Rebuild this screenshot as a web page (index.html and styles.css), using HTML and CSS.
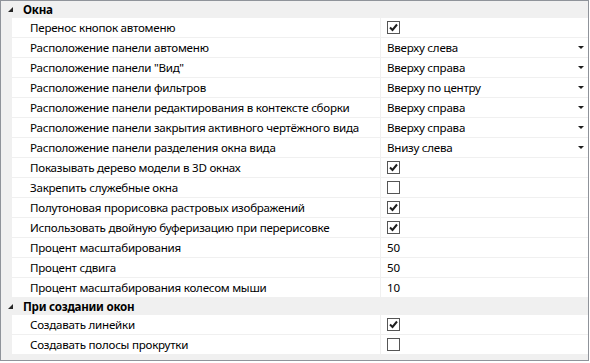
FILE: index.html
```html
<!DOCTYPE html>
<html lang="ru">
<head>
<meta charset="utf-8">
<title>Окна</title>
<link rel="stylesheet" href="styles.css">
</head>
<body>
<div class="pg">
  <div class="cat"><span class="tri"><svg width="5" height="5" viewBox="0 0 5 5"><polygon points="5,0 5,5 0,5" fill="#262626"/></svg></span><span class="cat-t">Окна</span></div>

  <div class="row"><div class="gut"></div><div class="name">Перенос кнопок автоменю</div><div class="val"><span class="cb"><svg width="11" height="11" viewBox="0 0 11 11"><path d="M2 5.5 L4.5 8 L9 2.5" fill="none" stroke="#1e1e1e" stroke-width="2"/></svg></span></div></div>
  <div class="row"><div class="gut"></div><div class="name">Расположение панели автоменю</div><div class="val"><span>Вверху слева</span><span class="dd"></span></div></div>
  <div class="row"><div class="gut"></div><div class="name">Расположение панели "Вид"</div><div class="val"><span>Вверху справа</span><span class="dd"></span></div></div>
  <div class="row"><div class="gut"></div><div class="name">Расположение панели фильтров</div><div class="val"><span>Вверху по центру</span><span class="dd"></span></div></div>
  <div class="row"><div class="gut"></div><div class="name">Расположение панели редактирования в контексте сборки</div><div class="val"><span>Вверху справа</span><span class="dd"></span></div></div>
  <div class="row"><div class="gut"></div><div class="name">Расположение панели закрытия активного чертёжного вида</div><div class="val"><span>Вверху справа</span><span class="dd"></span></div></div>
  <div class="row"><div class="gut"></div><div class="name">Расположение панели разделения окна вида</div><div class="val"><span>Внизу слева</span><span class="dd"></span></div></div>
  <div class="row"><div class="gut"></div><div class="name">Показывать дерево модели в 3D окнах</div><div class="val"><span class="cb"><svg width="11" height="11" viewBox="0 0 11 11"><path d="M2 5.5 L4.5 8 L9 2.5" fill="none" stroke="#1e1e1e" stroke-width="2"/></svg></span></div></div>
  <div class="row"><div class="gut"></div><div class="name">Закрепить служебные окна</div><div class="val"><span class="cb"></span></div></div>
  <div class="row"><div class="gut"></div><div class="name">Полутоновая прорисовка растровых изображений</div><div class="val"><span class="cb"><svg width="11" height="11" viewBox="0 0 11 11"><path d="M2 5.5 L4.5 8 L9 2.5" fill="none" stroke="#1e1e1e" stroke-width="2"/></svg></span></div></div>
  <div class="row"><div class="gut"></div><div class="name">Использовать двойную буферизацию при перерисовке</div><div class="val"><span class="cb"><svg width="11" height="11" viewBox="0 0 11 11"><path d="M2 5.5 L4.5 8 L9 2.5" fill="none" stroke="#1e1e1e" stroke-width="2"/></svg></span></div></div>
  <div class="row"><div class="gut"></div><div class="name">Процент масштабирования</div><div class="val"><span>50</span></div></div>
  <div class="row"><div class="gut"></div><div class="name">Процент сдвига</div><div class="val"><span>50</span></div></div>
  <div class="row"><div class="gut"></div><div class="name">Процент масштабирования колесом мыши</div><div class="val"><span>10</span></div></div>

  <div class="cat"><span class="tri"><svg width="5" height="5" viewBox="0 0 5 5"><polygon points="5,0 5,5 0,5" fill="#262626"/></svg></span><span class="cat-t">При создании окон</span></div>

  <div class="row"><div class="gut"></div><div class="name">Создавать линейки</div><div class="val"><span class="cb"><svg width="11" height="11" viewBox="0 0 11 11"><path d="M2 5.5 L4.5 8 L9 2.5" fill="none" stroke="#1e1e1e" stroke-width="2"/></svg></span></div></div>
  <div class="row"><div class="gut"></div><div class="name">Создавать полосы прокрутки</div><div class="val"><span class="cb"></span></div></div>
</div>
</body>
</html>
```

FILE: styles.css
```css
html, body {
  margin: 0;
  padding: 0;
  background: #ffffff;
}

.pg {
  width: 589px;
  height: 361px;
  box-sizing: border-box;
  border: 1px solid #8f939a;
  background: #f0f0f0;
  font-family: "Noto Sans", "Open Sans", sans-serif;
  font-size: 11.6px;
  letter-spacing: -0.25px;
  color: #000;
  display: flex;
  flex-direction: column;
}

.cat {
  height: 17px;
  flex: none;
  display: flex;
  align-items: center;
  background: #f0f0f0;
}

.tri {
  width: 22px;
  height: 17px;
  display: flex;
  align-items: center;
  justify-content: flex-start;
  padding-left: 7px;
  box-sizing: border-box;
}

.tri svg {
  display: block;
}

.cat-t {
  font-weight: bold;
  line-height: 17px;
}

.row {
  height: 20px;
  flex: none;
  display: grid;
  grid-template-columns: 11px 369px 1fr;
}

.gut {
  background: #f0f0f0;
}

.name {
  background: #fff;
  border-bottom: 1px solid #f0f0f0;
  border-right: 1px solid #f0f0f0;
  padding-left: 18px;
  line-height: 19px;
  white-space: nowrap;
  overflow: hidden;
}

.val {
  background: #fff;
  border-bottom: 1px solid #f0f0f0;
  padding-left: 6px;
  padding-right: 4px;
  display: flex;
  align-items: center;
  justify-content: space-between;
  line-height: 19px;
  white-space: nowrap;
}

.cb {
  width: 13px;
  height: 13px;
  box-sizing: border-box;
  border: 1px solid #555;
  background: #fff;
  display: flex;
  align-items: center;
  justify-content: center;
}

.cb svg {
  display: block;
}

.dd {
  width: 0;
  height: 0;
  border-left: 3px solid transparent;
  border-right: 3px solid transparent;
  border-top: 3px solid #1e1e1e;
}
```
